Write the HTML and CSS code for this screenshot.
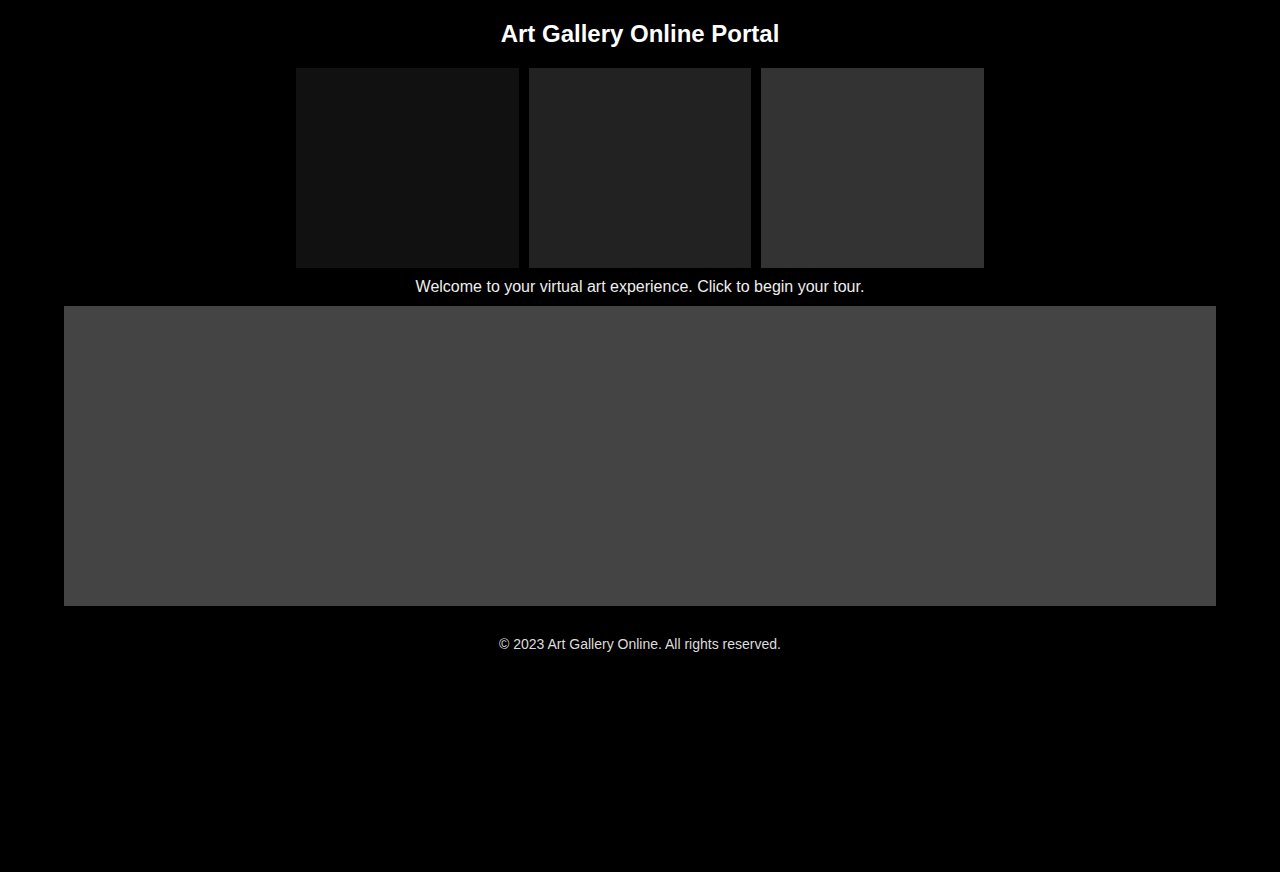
FILE: index.html
```html
<!DOCTYPE html>
<html lang="en">
<head>
<meta charset="utf-8">
<title>Art Gallery Online Portal</title>
<link rel="stylesheet" href="styles.css">
</head>
<body>
<header class="header">
  <h1 class="title">Art Gallery Online Portal</h1>
</header>
<main class="main">
  <div class="gallery">
    <div class="art art-1"></div>
    <div class="art art-2"></div>
    <div class="art art-3"></div>
  </div>
  <p class="intro">Welcome to your virtual art experience. Click to begin your tour.</p>
  <div class="tour"></div>
</main>
<footer class="footer">© 2023 Art Gallery Online. All rights reserved.</footer>
</body>
</html>
```
FILE: styles.css
```css
html, body {
  margin: 0;
  padding: 0;
  background: #000;
  color: #fff;
  font-family: "Liberation Sans", Arial, sans-serif;
}
.header {
  padding: 20px 0 20px;
  text-align: center;
}
.title {
  margin: 0;
  font-size: 24px;
  font-weight: bold;
  line-height: 28px;
}
.main {
  display: flex;
  flex-direction: column;
  align-items: center;
}
.gallery {
  display: grid;
  grid-template-columns: repeat(3, 1fr);
  gap: 10px;
  width: 688px;
}
.art {
  height: 200px;
}
.art-1 { background: #111; }
.art-2 { background: #222; }
.art-3 { background: #333; }
.intro {
  margin: 9px 0 10px;
  font-size: 16px;
  line-height: 19px;
  color: #eee;
  text-align: center;
}
.tour {
  width: 90%;
  height: 300px;
  background: #444;
}
.footer {
  padding: 30px 0;
  text-align: center;
  font-size: 14px;
  line-height: 16px;
  color: #ddd;
}
```
